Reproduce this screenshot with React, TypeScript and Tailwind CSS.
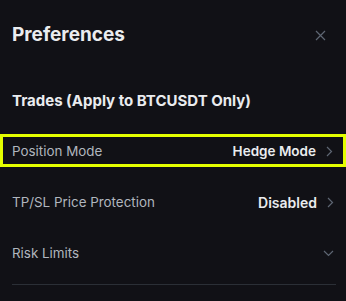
import React from 'react';

const Chevron = ({ down }: { down?: boolean }) => (
  <svg
    width={down ? 11 : 7}
    height={down ? 7 : 11}
    viewBox={down ? '0 0 11 7' : '0 0 7 11'}
    fill="none"
    stroke="#5e6673"
    strokeWidth="1.2"
  >
    {down ? <path d="M1 1l4.5 4.5L10 1" /> : <path d="M1 1l4.5 4.5L1 10" />}
  </svg>
);

const Row = ({ label, value, down }: { label: string; value?: string; down?: boolean }) => (
  <div className="flex h-[33px] items-center justify-between pl-3 pr-[12px]">
    <span className="text-[13.4px] text-[#b0b6be]">{label}</span>
    <div className="flex items-center gap-[10px]">
      {value && <span className="text-[14px] font-semibold text-[#eaecef]">{value}</span>}
      <Chevron down={down} />
    </div>
  </div>
);

export default function App() {
  return (
    <div
      className="h-[301px] w-[346px] overflow-hidden bg-[#111116] pt-6"
      style={{ fontFamily: 'Inter, "Noto Sans", sans-serif' }}
    >
      <div className="flex h-[22px] items-center justify-between pl-3 pr-5">
        <h2 className="text-[19px] font-bold text-[#eaecef]">Preferences</h2>
        <svg width="11" height="11" viewBox="0 0 11 11" stroke="#5e6673" strokeWidth="1.2">
          <path d="M1 1l9 9M10 1l-9 9" />
        </svg>
      </div>

      <h3 className="mt-[45px] pl-3 text-[15px] font-bold leading-5 text-[#eaecef]">
        Trades (Apply to BTCUSDT Only)
      </h3>

      <div className="mt-[23px] flex h-[33px] items-center justify-between border-[3px] border-[#e4ff00] pl-[9px] pr-[10px]">
        <span className="mt-[2px] text-[13.4px] text-[#b0b6be]">Position Mode</span>
        <div className="mt-[2px] flex items-center gap-[10px]">
          <span className="text-[13.5px] font-semibold text-[#eaecef]">Hedge Mode</span>
          <Chevron />
        </div>
      </div>

      <div className="mt-[19px]">
        <Row label="TP/SL Price Protection" value="Disabled" />
      </div>

      <div className="mt-[18px]">
        <Row label="Risk Limits" down />
      </div>

      <div className="ml-3 mr-[10px] mt-[14px] h-px bg-[#2b2f36]" />
    </div>
  );
}
